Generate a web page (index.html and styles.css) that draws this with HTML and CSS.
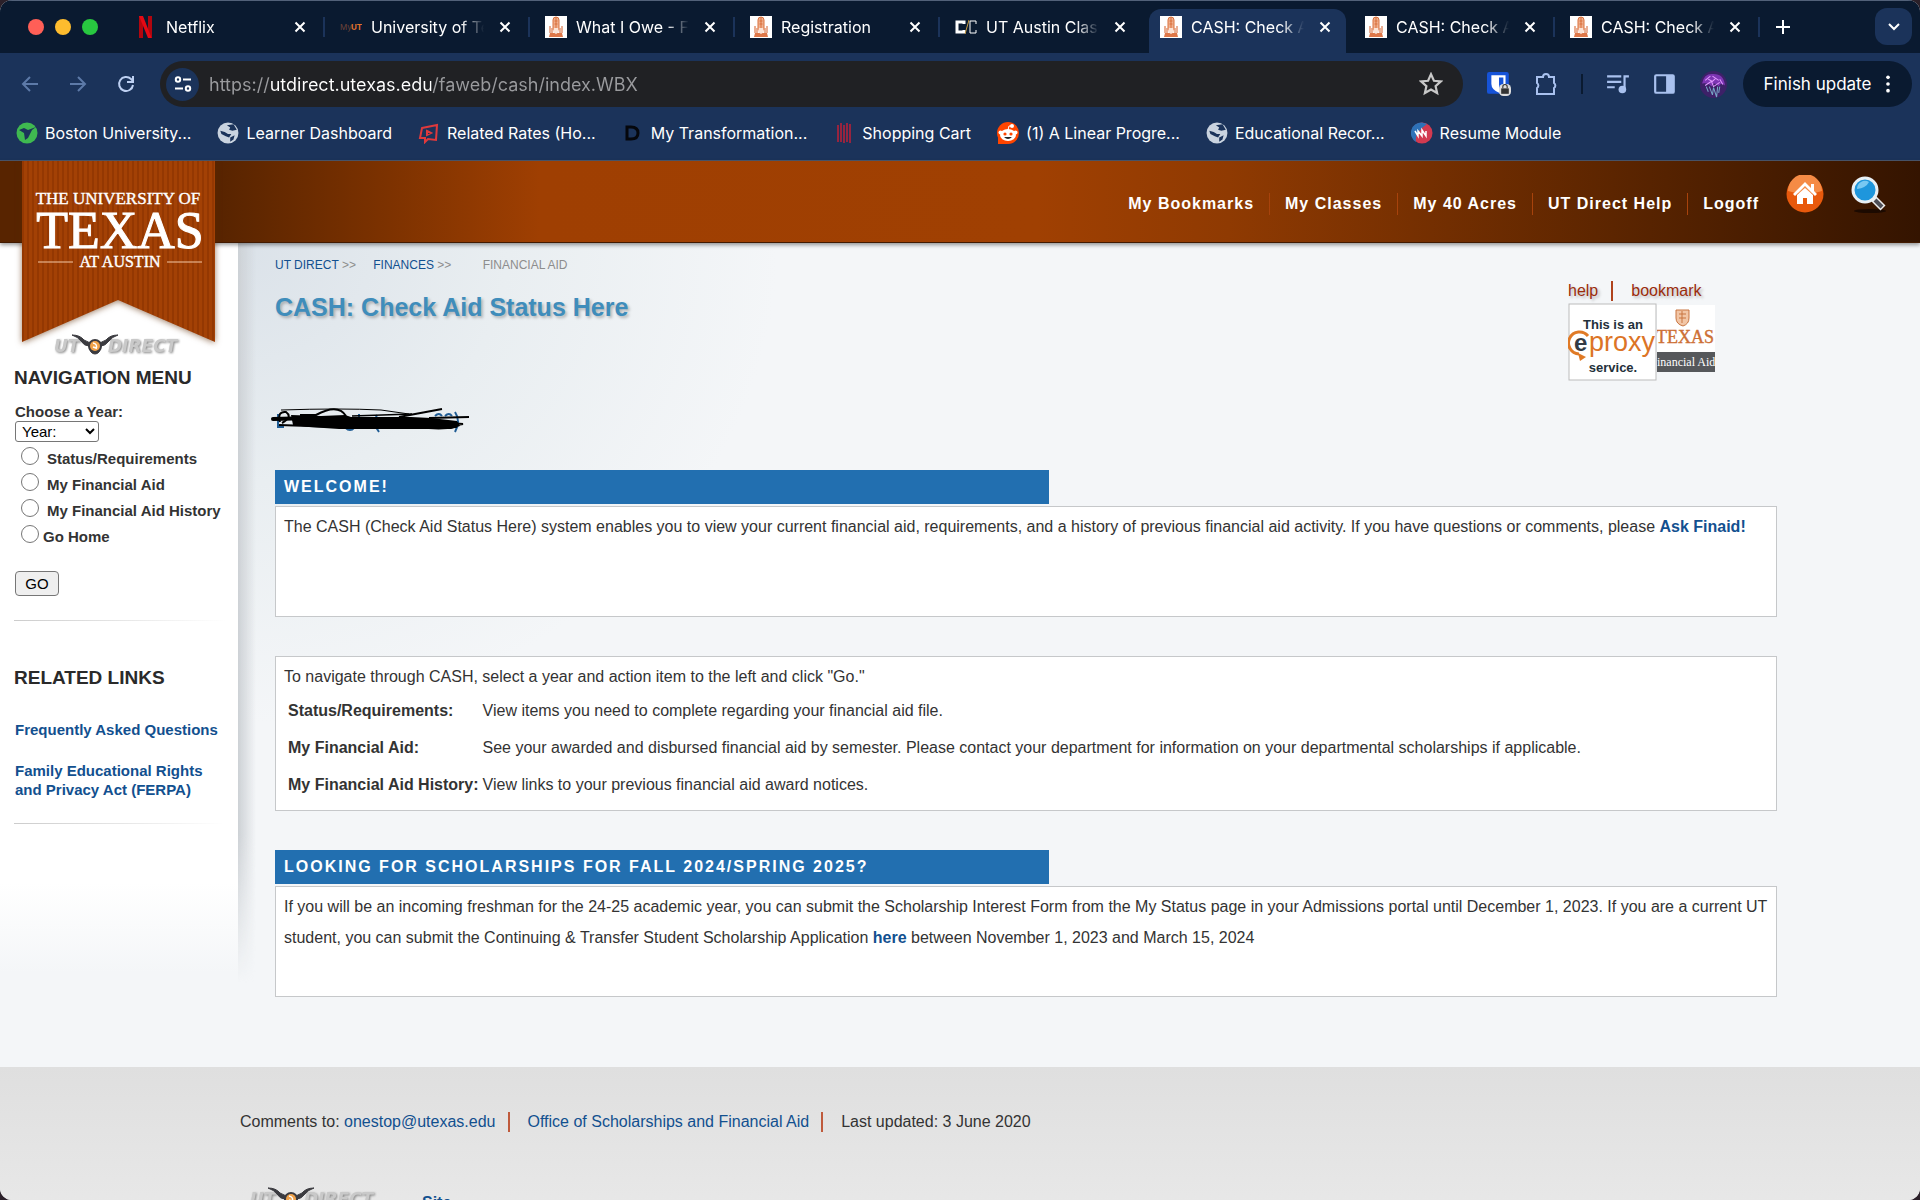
FILE: index.html
```html
<!DOCTYPE html>
<html lang="en">
<head>
    <meta charset="UTF-8">
    <meta name="viewport" content="width=device-width, initial-scale=1.0">
    <title>CASH: Check Aid Status Here</title>
    <link rel="stylesheet" href="styles.css">
</head>
<body>

<!-- Shared icons -->
<svg class="defs" aria-hidden="true">
    <symbol id="tower" viewBox="0 0 22 22">
        <rect width="22" height="22" fill="#fff"/>
        <path d="M8 14V4q0-3 3-3t3 3v10z" fill="#f0b08e" stroke="#d9703c"/>
        <path d="M11 1v12M9.500 5h3M9.500 8h3" stroke="#d9703c"/>
        <path d="M5 10v7M7 12v5M15 12v5M17 10v7" stroke="#e39470" stroke-width="1.500"/>
        <path d="M5 17h12l1 4H4z" fill="#df7748"/>
        <path d="M9 12h4l1 4-3 2-3-2z" fill="#fbe3d6"/>
    </symbol>
    <symbol id="x" viewBox="0 0 12 12">
        <path d="M1.500 1.500l9 9M10.500 1.500l-9 9" stroke="#fff" stroke-width="2"/>
    </symbol>
    <symbol id="globe" viewBox="0 0 20 20">
        <circle cx="10" cy="10" r="9.500" fill="#c9d3df"/>
        <path d="M3 8l4 1 3 2 3 0-2 3-3-1-4-2zM9 3l6-1 3 5-4 1-3-1 1-2zM12 14l4-2-1 4-3 2z" fill="#1b335a"/>
    </symbol>
    <symbol id="longhorn" viewBox="0 0 132 26">
        <path d="M18 2q8 0 12 5 4 3 11 3 7 0 11-3 4-5 12-5-6 2-9 6-4 5-8 5-1 8-6 8t-6-8q-5 0-8-5-3-4-9-6z" fill="#3b3b40" stroke="#3b3b40"/>
        <circle cx="41" cy="13" r="7" fill="#3b3b40"/>
        <circle cx="41" cy="13" r="5" fill="#f0a24a"/>
        <path d="M39 10q5 1 3 6M39 14l3 1" stroke="#fff" stroke-width="1.500" fill="none"/>
    </symbol>
</svg>

<div class="window">

<!-- Browser tabs -->
<div class="tabs">
    <div class="lights"><span class="red"></span><span class="yellow"></span><span class="green"></span></div>
    <div class="tab">
        <svg class="favicon" viewBox="0 0 22 22"><path d="M4 0h4v22l-4 1zM13 0h4v23l-4-1z" fill="#b1060f"/><path d="M4 0h4l9 23-4-1z" fill="#e50914"/></svg>
        <a href="#">Netflix</a><button aria-label="Close tab"><svg><use href="#x"/></svg></button>
    </div>
    <div class="tab">
        <svg class="favicon" viewBox="0 0 22 22"><text x="0" y="14" font-size="8" fill="#6d4338">My</text><text x="11" y="14" font-size="8" font-weight="bold" fill="#e2742c">UT</text></svg>
        <a href="#">University of Texas</a><button aria-label="Close tab"><svg><use href="#x"/></svg></button>
    </div>
    <div class="tab">
        <svg class="favicon"><use href="#tower"/></svg>
        <a href="#">What I Owe - Fin</a><button aria-label="Close tab"><svg><use href="#x"/></svg></button>
    </div>
    <div class="tab">
        <svg class="favicon"><use href="#tower"/></svg>
        <a href="#">Registration</a><button aria-label="Close tab"><svg><use href="#x"/></svg></button>
    </div>
    <div class="tab">
        <svg class="favicon" viewBox="0 0 22 22"><path d="M9 8V6H2v10h7v-2" fill="none" stroke="#fff" stroke-width="3"/><path d="M10 18l4-14" stroke="#c99a3c"/><path d="M21 8V5h-6v12h6v-3" fill="none" stroke="#fff"/></svg>
        <a href="#">UT Austin Class</a><button aria-label="Close tab"><svg><use href="#x"/></svg></button>
    </div>
    <div class="tab active">
        <svg class="favicon"><use href="#tower"/></svg>
        <a href="#">CASH: Check Aid</a><button aria-label="Close tab"><svg><use href="#x"/></svg></button>
    </div>
    <div class="tab">
        <svg class="favicon"><use href="#tower"/></svg>
        <a href="#">CASH: Check Aid</a><button aria-label="Close tab"><svg><use href="#x"/></svg></button>
    </div>
    <div class="tab">
        <svg class="favicon"><use href="#tower"/></svg>
        <a href="#">CASH: Check Aid</a><button aria-label="Close tab"><svg><use href="#x"/></svg></button>
    </div>
    <button class="new-tab" aria-label="New tab"><svg viewBox="0 0 14 14"><path d="M7 0v14M0 7h14" stroke="#fff" stroke-width="2"/></svg></button>
    <button class="tab-search" aria-label="Search tabs"><svg viewBox="0 0 12 12"><path d="M1 3l5 5 5-5" fill="none" stroke="#fff" stroke-width="2"/></svg></button>
</div>

<!-- Address bar -->
<div class="toolbar">
    <button aria-label="Back"><svg viewBox="0 0 20 20"><path d="M18 10H3M10 3l-7 7 7 7" fill="none" stroke="#5d7aa8" stroke-width="2"/></svg></button>
    <button aria-label="Forward"><svg viewBox="0 0 20 20"><path d="M2 10h15M10 3l7 7-7 7" fill="none" stroke="#5d7aa8" stroke-width="2"/></svg></button>
    <button aria-label="Reload"><svg viewBox="0 0 20 20"><path d="M17 11a7 7 0 1 1-2-6l2 2" fill="none" stroke="#bdd0f2" stroke-width="2"/><path d="M18 2v7h-7v-2h5V2z" fill="#bdd0f2"/></svg></button>
    <div class="omnibox">
        <button class="site-info" aria-label="Site information"><svg viewBox="0 0 18 18"><g fill="none" stroke="#fff" stroke-width="2"><circle cx="4" cy="4.500" r="2.200"/><path d="M9 4.500h8M1 13.500h8"/><circle cx="14" cy="13.500" r="2.200"/></g></svg></button>
        <input type="text" aria-label="Address" value="https://utdirect.utexas.edu/faweb/cash/index.WBX">
        <button aria-label="Bookmark this tab"><svg viewBox="0 0 22 22"><path d="M11 2l2.700 6 6.300.600-4.800 4.300 1.400 6.400L11 16l-5.600 3.300 1.400-6.400L2 8.600 8.300 8z" fill="none" stroke="#c8c8c8" stroke-width="2"/></svg></button>
    </div>
    <div class="extensions">
        <button aria-label="Bitwarden"><svg viewBox="0 0 22 22"><rect width="20" height="20" rx="2" fill="#1653d8"/><path d="M4 3h13v8q0 5-6 8-7-3-7-8z" fill="#fff"/><path d="M11 5h4v6q0 3-4 6z" fill="#1653d8"/><rect x="11" y="11" width="11" height="11" rx="4" fill="#ddd"/><rect x="13" y="15" width="7" height="5" fill="#333"/><path d="M14.500 15v-1.500a2 2 0 0 1 4 0V15" fill="none" stroke="#333"/></svg></button>
        <button aria-label="Extensions"><svg viewBox="0 0 24 24"><path d="M3 5h6a3 3 0 0 1 6 0h5v6a3 3 0 0 1 0 5v6H3v-6a3 3 0 0 0 0-5z" fill="none" stroke="#a9c1ee" stroke-width="2"/></svg></button>
        <span class="divider"></span>
        <button aria-label="Media"><svg viewBox="0 0 22 22"><path d="M1 4h13M1 9h13M1 14h7M17 16V4h4" fill="none" stroke="#a9c1ee" stroke-width="2"/><circle cx="15" cy="16" r="3.500" fill="#a9c1ee"/></svg></button>
        <button aria-label="Side panel"><svg viewBox="0 0 22 22"><rect x="2" y="3" width="17" height="16" rx="1" fill="none" stroke="#a9c1ee" stroke-width="2"/><path d="M12 3h7v16h-7z" fill="#a9c1ee"/></svg></button>
        <button aria-label="Profile"><svg class="avatar" viewBox="0 0 26 26"><circle cx="13" cy="13" r="13" fill="#3d2168"/><path d="M2 12Q4 2 13 3q10 0 11 11-4-4-6 1-4-6-7 0-3-4-9-3z" fill="#7d35b3"/><path d="M5 9l5-4M12 5l6 4M5 14l6-4 2 5 6-4M19 8l3 5M8 8l4 2 3-3" stroke="#e29bff" fill="none"/><path d="M9 15l3 8 1-7 3 9 1-10M6 15l2 5M19 15l-1 6" stroke="#77a5c5" fill="none"/></svg></button>
    </div>
    <button class="update">Finish update <svg viewBox="0 0 6 24"><circle cx="3" cy="4" r="2.200"/><circle cx="3" cy="12" r="2.200"/><circle cx="3" cy="20" r="2.200"/></svg></button>
</div>

<!-- Bookmarks -->
<div class="bookmarks">
    <a href="#"><svg viewBox="0 0 22 22"><circle cx="11" cy="11" r="10.500" fill="#3fb950"/><path d="M3 8l5-2 4 2 8-3-4 3-4 8-3 2-1-7z" fill="#1b335a"/></svg>Boston University...</a>
    <a href="#"><svg><use href="#globe"/></svg>Learner Dashboard</a>
    <a href="#"><svg viewBox="0 0 22 22"><path d="M4 6l15-3-1 15-8-1-3 3v-4H2zM9 9l4 2-4 2z" fill="none" stroke="#e0393c" stroke-width="2"/></svg>Related Rates (Ho...</a>
    <a href="#"><svg viewBox="0 0 22 22"><path d="M5 5h4q7 0 7 6t-7 6H5z" fill="none" stroke="#05070c" stroke-width="3"/></svg>My Transformation...</a>
    <a href="#"><svg viewBox="0 0 22 22"><path d="M5 3v17M8 1v19M11 3v18M14 1v19M17 2v19" stroke="#96243f" stroke-width="2"/></svg>Shopping Cart</a>
    <a href="#"><svg viewBox="0 0 22 22"><circle cx="11" cy="11" r="11" fill="#ff4500"/><path d="M1 15v7h10z" fill="#ff4500"/><ellipse cx="11" cy="13" rx="8" ry="6" fill="#fff"/><circle cx="3.500" cy="10.500" r="2" fill="#fff"/><circle cx="18.500" cy="10.500" r="2" fill="#fff"/><circle cx="15" cy="4" r="2" fill="#fff"/><path d="M11 8l1-4 3 0" fill="none" stroke="#fff"/><circle cx="8" cy="12" r="1.600" fill="#ff4500"/><circle cx="14" cy="12" r="1.600" fill="#ff4500"/><path d="M7 15h8q-4 4-8 0z" fill="#222"/></svg>(1) A Linear Progre...</a>
    <a href="#"><svg><use href="#globe"/></svg>Educational Recor...</a>
    <a href="#"><svg viewBox="0 0 22 22"><circle cx="11" cy="11" r="10.500" fill="#d23a50"/><path d="M11 .500A10.500 10.500 0 0 0 5 20Q3 11 16 2z" fill="#2e72b8"/><path d="M4 9l3 5V9l4 5V8l4 6V9" fill="none" stroke="#fff" stroke-width="1.500"/></svg>Resume Module</a>
</div>

<!-- Site header -->
<header>
    <svg class="banner" viewBox="0 0 213 188">
        <defs>
            <pattern id="stripes" width="5" height="4" patternUnits="userSpaceOnUse"><rect width="5" height="4" fill="#a34105"/><rect width="2" height="4" fill="#943802"/></pattern>
        </defs>
        <path class="ribbon" d="M10 0h193v181l-97-42-96 42z" fill="url(#stripes)"/>
        <g class="banner-text">
            <text x="106" y="43" font-size="17">THE UNIVERSITY OF</text>
            <text x="108" y="87" font-size="52" stroke-width="1">TEXAS</text>
            <text x="108" y="106" font-size="16">AT AUSTIN</text>
            <path d="M26 101h35M155 101h35" stroke="#f3c8a5" stroke-width="1"/>
        </g>
    </svg>
    <nav>
        <a href="#">My Bookmarks</a>
        <a href="#">My Classes</a>
        <a href="#">My 40 Acres</a>
        <a href="#">UT Direct Help</a>
        <a href="#">Logoff</a>
    </nav>
    <div class="header-icons">
        <a href="#" aria-label="Home"><svg viewBox="0 0 38 38"><circle cx="19" cy="19" r="18.500" fill="#e8590c"/><path d="M2 16a17 17 0 0 1 34 0q-16 6-34 0z" fill="#f58b45"/><path d="M19 7L7 19l2 2 10-10 10 10 2-2-3-3V9h-3v4z" fill="#fff"/><path d="M11 20l8-7 8 7v9h-6v-6h-4v6h-6z" fill="#fff"/></svg></a>
        <a href="#" aria-label="Search"><svg viewBox="0 0 38 38"><ellipse cx="20" cy="36" rx="16" ry="2" fill="#1c0a00"/><path d="M22 22l11 11" stroke="#eee" stroke-width="7"/><path d="M25 25l7 7" stroke="#4e4e56" stroke-width="4"/><circle cx="15" cy="15" r="12" fill="#1e96dc" stroke="#e8f0f5" stroke-width="3"/><path d="M7 14a8 8 0 0 1 12-7q-3 6-12 7z" fill="#78c8f2"/></svg></a>
    </div>
</header>

<div class="page">
    <aside>
        <svg class="utdirect" viewBox="0 0 132 26">
            <text x="0" y="19">UT</text>
            <text x="54" y="19">DIRECT</text>
            <use href="#longhorn"/>
        </svg>
        <h3>NAVIGATION MENU</h3>
        <form>
            <label class="year-label" for="year">Choose a Year:</label>
            <select id="year"><option>Year:</option></select>
            <div class="choice"><input type="radio" name="action" id="status"><label for="status">Status/Requirements</label></div>
            <div class="choice"><input type="radio" name="action" id="aid"><label for="aid">My Financial Aid</label></div>
            <div class="choice"><input type="radio" name="action" id="history"><label for="history">My Financial Aid History</label></div>
            <div class="choice home"><input type="radio" name="action" id="home"><label for="home">Go Home</label></div>
            <button type="button" class="go">GO</button>
        </form>
        <hr>
        <h3>RELATED LINKS</h3>
        <p><a href="#">Frequently Asked Questions</a></p>
        <p><a href="#">Family Educational Rights and Privacy Act (FERPA)</a></p>
        <hr>
    </aside>

    <main>
        <div class="page-head">
            <div>
                <div class="crumbs"><a href="#">UT DIRECT</a> &gt;&gt; <a href="#" class="second">FINANCES</a> &gt;&gt; <span>FINANCIAL AID</span></div>
                <h1>CASH: Check Aid Status Here</h1>
                <svg class="scribble" viewBox="0 0 204 30">
                    <path d="M9 10v13h6M76 20q0 6 5 6t4-6M108 11q-5 8 2 17M90 10v4M166 12q4-4 7 0M176 12q4-4 7 0M186 8q6 9 0 20" fill="none" stroke="#1f5c94" stroke-width="2"/>
                    <path d="M22 11l30 1 24-1 6 2h60l20 1 26 3 3 5-9 3H70l-30-2-16-2z" fill="#000"/>
                    <g fill="none" stroke="#000">
                        <path d="M12 6q60-2 100 0l28 4"/>
                        <path d="M83 12l60-2M150 22q16 5 38 1" stroke-width="1.500"/>
                        <path d="M10 21l60 2M11 18q-3-11 6-10 7 5-4 11M31 11l16 0q22-12 30 1M130 13l43-8M160 14l40-1M166 18l28 2-24 4" stroke-width="2"/>
                        <path d="M4 15l40-1" stroke-width="4" stroke-linecap="round"/>
                    </g>
                </svg>
            </div>
            <div class="tools">
                <div class="tool-links"><a href="#">help</a><a href="#">bookmark</a></div>
                <div class="badges">
                    <svg class="eproxy" viewBox="0 0 89 78">
                        <rect x="1" y="1" width="87" height="76" fill="#fff" stroke="#bbb"/>
                        <g font-weight="bold" font-size="13" text-anchor="middle" fill="#23303a"><text x="45" y="26">This is an</text><text x="45" y="69">service.</text></g>
                        <path d="M20 33a11 11 0 1 0-9 18" fill="none" stroke="#e07a26" stroke-width="3"/>
                        <path d="M10 50l8 4-6 4z" fill="#e07a26"/>
                        <text x="6" y="48" font-size="24" font-weight="bold" fill="#333b45">e</text>
                        <text x="21" y="48" font-size="27" fill="#dc7426">proxy</text>
                    </svg>
                    <svg class="finaid" viewBox="0 0 58 67">
                        <rect width="58" height="67" fill="#fff"/>
                        <path d="M19 5h13v8q0 6-6 8-7-2-7-8z" fill="#f2c6a6" stroke="#c87541"/><path d="M22 9h7M25 6v12M22 13h7" stroke="#c87541"/>
                        <text x="-1" y="38" font-size="18" fill="#cd7036" stroke="#cd7036" stroke-width="0.4">TEXAS</text>
                        <rect y="47" width="58" height="20" fill="#56585b"/>
                        <text x="0" y="61" font-size="12" fill="#fff">inancial Aid</text>
                    </svg>
                </div>
            </div>
        </div>

        <h2>WELCOME!</h2>
        <div class="panel">
            The CASH (Check Aid Status Here) system enables you to view your current financial aid, requirements, and a history of previous financial aid activity. If you have questions or comments, please <a href="#">Ask Finaid!</a>
        </div>

        <div class="panel guide">
            To navigate through CASH, select a year and action item to the left and click "Go."
            <table>
                <tr><th>Status/Requirements:</th><td>View items you need to complete regarding your financial aid file.</td></tr>
                <tr><th>My Financial Aid:</th><td>See your awarded and disbursed financial aid by semester. Please contact your department for information on your departmental scholarships if applicable.</td></tr>
                <tr><th>My Financial Aid History:</th><td>View links to your previous financial aid award notices.</td></tr>
            </table>
        </div>

        <h2>LOOKING FOR SCHOLARSHIPS FOR FALL 2024/SPRING 2025?</h2>
        <div class="panel">
            If you will be an incoming freshman for the 24-25 academic year, you can submit the Scholarship Interest Form from the My Status page in your Admissions portal until December 1, 2023. If you are a current UT student, you can submit the Continuing &amp; Transfer Student Scholarship Application <a href="#">here</a> between November 1, 2023 and March 15, 2024
        </div>
    </main>
</div>

<footer>
    <ul>
        <li>Comments to: <a href="#">onestop@utexas.edu</a></li>
        <li><a href="#">Office of Scholarships and Financial Aid</a></li>
        <li>Last updated: 3 June 2020</li>
    </ul>
    <div class="footer-site">
        <svg class="utdirect" viewBox="0 0 132 26">
            <text x="0" y="19">UT</text>
            <text x="54" y="19">DIRECT</text>
            <use href="#longhorn"/>
        </svg>
        <a href="#">Site</a>
    </div>
</footer>

</div>

</body>
</html>
```
FILE: styles.css
```css
* {
    box-sizing: border-box;
}

body {
    font-family: "Liberation Sans", Arial, sans-serif;
    font-size: 15px;
    color: #333;
    margin: 0;
    background-color: #2b2029;
}

a {
    color: #12508f;
    text-decoration: none;
}

button {
    font-family: inherit;
    padding: 0;
    border: 0;
    background: none;
    display: flex;
    align-items: center;
    justify-content: center;
}

.defs {
    position: absolute;
    width: 0;
    height: 0;
}

.window {
    display: flex;
    flex-direction: column;
    height: 100vh;
    overflow: hidden;
    border-radius: 12px;
    background-color: #f4f6f8;
}

/* Browser tabs */
.tabs {
    display: flex;
    flex: none;
    height: 53px;
    padding: 0 8px 0 28px;
    background-color: #0a1a30;
    border-top: 1px solid #526179;
    font-family: Inter, sans-serif;
}

.lights {
    display: flex;
    align-items: center;
    gap: 11px;
    width: 96px;
}

.lights span {
    width: 16px;
    height: 16px;
    border-radius: 50%;
}

.red {
    background-color: #ff5f57;
}

.yellow {
    background-color: #febc2e;
}

.green {
    background-color: #28c840;
}

.tab {
    position: relative;
    display: flex;
    align-items: center;
    width: 197px;
    height: 44px;
    margin: 8px 8px 0 0;
    padding: 0 15px 9px 11px;
    font-size: 16px;
}

.tab::after {
    content: "";
    position: absolute;
    right: -4px;
    top: 8px;
    width: 2px;
    height: 20px;
    background-color: #1b335a;
}

.tab .favicon {
    width: 22px;
    height: 22px;
    flex: none;
    margin-right: 9px;
}

.tab a {
    flex: 1;
    color: #fff;
    white-space: nowrap;
    overflow: hidden;
    margin-right: 15px;
    -webkit-mask-image: linear-gradient(to right, #000 80%, transparent);
    mask-image: linear-gradient(to right, #000 80%, transparent);
}

.tab button svg {
    width: 12px;
    height: 12px;
}

.tab.active {
    background-color: #1b335a;
    border-radius: 12px 12px 0 0;
}

.tab.active::after,
.tab:has(+ .active)::after {
    display: none;
}

.new-tab {
    margin-left: 12px;
    padding-bottom: 1px;
}

.new-tab svg {
    width: 14px;
    height: 14px;
}

.tab-search {
    width: 37px;
    height: 37px;
    margin: 7px 0 0 auto;
    border-radius: 12px;
    background-color: #1b335a;
}

.tab-search svg {
    width: 12px;
    height: 12px;
}

/* Address bar */
.toolbar {
    display: flex;
    align-items: center;
    flex: none;
    height: 62px;
    padding: 0 8px 0 20px;
    background-color: #1b335a;
    font-family: Inter, sans-serif;
}

.toolbar > button {
    margin-right: 28px;
}

.toolbar svg {
    width: 20px;
    height: 20px;
}

.omnibox {
    display: flex;
    flex: 1;
    align-items: center;
    height: 46px;
    margin-left: -4px;
    padding: 0 20px 0 6px;
    border-radius: 23px;
    background-color: #202124;
}

.omnibox .site-info {
    width: 33px;
    height: 33px;
    border-radius: 50%;
    background-color: #1b335a;
}

.omnibox .site-info svg {
    width: 18px;
    height: 18px;
}

/* the host part of the address is brighter than the rest */
.omnibox input {
    flex: 1;
    margin-left: 10px;
    padding: 0;
    border: 0;
    outline: 0;
    font-family: Inter, sans-serif;
    font-size: 18px;
    background: linear-gradient(to right, #9a9b9e 61px, #fff 61px, #fff 222px, #9a9b9e 222px);
    -webkit-background-clip: text;
    background-clip: text;
    color: transparent;
}

.omnibox > button:last-child svg {
    width: 24px;
    height: 24px;
}

.extensions {
    display: flex;
    align-items: center;
    gap: 23px;
    padding: 0 16px 0 24px;
}

.extensions svg {
    width: 24px;
    height: 24px;
}

.extensions .avatar {
    width: 27px;
    height: 27px;
}

.divider {
    width: 2px;
    height: 20px;
    background-color: #0a1a30;
}

.toolbar .update {
    gap: 14px;
    width: 169px;
    height: 46px;
    margin: 0;
    border-radius: 23px;
    background-color: #0a1a30;
    color: #fff;
    font-size: 17px;
}

.update svg {
    width: 6px;
    fill: #fff;
}

/* Bookmarks */
.bookmarks {
    display: flex;
    gap: 26px;
    flex: none;
    height: 46px;
    padding: 0 16px 10px;
    background-color: #1b335a;
    border-bottom: 1px solid #4b566b;
    font-family: Inter, sans-serif;
    font-size: 16px;
}

.bookmarks a {
    display: flex;
    align-items: center;
    gap: 7px;
    color: #fff;
    white-space: nowrap;
}

.bookmarks svg {
    width: 22px;
    height: 22px;
}

/* Site header */
header {
    position: relative;
    z-index: 1;
    display: flex;
    justify-content: flex-end;
    flex: none;
    height: 82px;
    padding: 14px 32px 0 0;
    background: linear-gradient(to right, #582400 0, #582400 220px, #7d3200 390px, #9f3f02 540px, #a04002 54%, #8f3a02 64%, #5c2500 84%, #341400 100%);
    border-bottom: 1px solid #421a00;
    box-shadow: 0 2px 4px rgba(0, 0, 0, 0.4);
}

.banner {
    position: absolute;
    left: 12px;
    top: 0;
    width: 213px;
    height: 188px;
}

.ribbon {
    filter: drop-shadow(0 1px 3px rgba(90, 40, 0, 0.6));
}

.banner-text {
    font-family: "Liberation Serif", serif;
    fill: #fff;
    stroke: #fff;
    stroke-width: 0.4;
    text-anchor: middle;
}

nav {
    display: flex;
    align-items: flex-start;
    padding: 18px 12px 0 0;
}

nav a {
    color: #fff;
    font-size: 16px;
    font-weight: bold;
    letter-spacing: 1px;
    line-height: 22px;
    padding: 0 15px;
}

nav a + a {
    border-left: 1px solid #a8430c;
}

.header-icons {
    display: flex;
    gap: 26px;
}

.header-icons svg {
    display: block;
    width: 38px;
    height: 38px;
}

/* Page body */
.page {
    display: flex;
    flex: none;
    background: radial-gradient(ellipse 540px 480px at 238px 0, #dbe2e9, #e9eef1 50%, #f4f6f8);
}

aside {
    position: relative;
    width: 238px;
    padding: 90px 13px 0 14px;
    background: linear-gradient(#fff 640px, #f4f6f8 730px);
}

/* soft shadow down the right edge of the menu */
aside::after {
    content: "";
    position: absolute;
    left: 238px;
    top: 0;
    width: 18px;
    height: 740px;
    background: linear-gradient(to right, #cdd1d5, rgba(215, 220, 225, 0));
    -webkit-mask-image: linear-gradient(#000 80%, transparent);
    mask-image: linear-gradient(#000 80%, transparent);
}

.utdirect {
    display: block;
    width: 132px;
    height: 26px;
}

.utdirect text {
    font-family: "DejaVu Sans", sans-serif;
    font-size: 17px;
    font-weight: bold;
    font-style: italic;
    fill: #c9c9c9;
    filter: drop-shadow(1px 1px 1px #888);
}

aside .utdirect {
    margin-left: 40px;
}

aside h3 {
    margin: 8px 0 0;
    font-size: 19px;
    line-height: 22px;
    color: #2a2a2a;
}

aside form {
    padding: 13px 1px 0;
    font-weight: bold;
}

.year-label {
    display: block;
    line-height: 19px;
}

aside select {
    display: block;
    width: 84px;
    height: 21px;
    margin-bottom: 5px;
    padding: 0 2px;
    border: 1px solid #767676;
    border-radius: 3px;
    background-color: #fff;
    font-family: inherit;
    font-size: 15px;
    color: #000;
}

.choice {
    display: flex;
    align-items: flex-start;
    gap: 8px;
    height: 26px;
    padding-left: 6px;
    line-height: 24px;
    white-space: nowrap;
}

.choice.home {
    gap: 4px;
}

.choice input {
    width: 18px;
    height: 18px;
    margin: 0;
}

.go {
    width: 44px;
    height: 25px;
    margin-top: 20px;
    border: 1px solid #767676;
    border-radius: 4px;
    background-color: #efefef;
    font-size: 15px;
    color: #000;
}

aside hr {
    height: 1px;
    margin: 24px 0 0;
    border: 0;
    background: linear-gradient(to right, #ccc, #fff);
}

aside hr + h3 {
    margin: 46px 0 31px;
}

aside p {
    margin: 0 0 22px 1px;
    font-weight: bold;
    line-height: 19px;
}

aside p a {
    display: block;
}

main {
    flex: 1;
    padding: 12px 143px 70px 37px;
}

.page-head {
    display: flex;
    justify-content: space-between;
    padding-right: 62px;
    margin-bottom: 36px;
}

.crumbs {
    font-size: 12px;
    line-height: 20px;
    color: #8d8d8d;
}

.crumbs .second {
    margin-left: 14px;
}

.crumbs span {
    margin-left: 28px;
}

h1 {
    margin: 17px 0 82px;
    font-size: 25px;
    line-height: 30px;
    color: #3f8dbb;
    text-shadow: 2px 2px 3px rgba(0, 0, 0, 0.25);
}

.scribble {
    display: block;
    width: 204px;
    height: 30px;
    margin-left: -6px;
}

.tools {
    padding-top: 26px;
}

.tool-links {
    display: flex;
    font-size: 16px;
    line-height: 20px;
}

.tool-links a {
    color: #9b2c0b;
    text-shadow: 2px 2px 3px rgba(0, 0, 0, 0.25);
}

.tool-links a + a {
    margin-left: 13px;
    padding-left: 18px;
    border-left: 2px solid #b0431d;
}

.badges {
    display: flex;
    padding-top: 2px;
}

.eproxy {
    width: 89px;
    height: 78px;
}

.finaid {
    width: 58px;
    height: 67px;
    margin-top: 2px;
    font-family: "Liberation Serif", serif;
}

h2 {
    width: 51.5%;
    margin: 0 0 2px;
    padding: 0 9px;
    background-color: #226fb0;
    color: #fff;
    font-size: 16px;
    letter-spacing: 2px;
    line-height: 34px;
}

.panel {
    min-height: 111px;
    margin-bottom: 39px;
    padding: 4px 8px;
    border: 1px solid #c6c8ca;
    background-color: #fff;
    font-size: 16px;
    line-height: 31px;
}

.panel:last-child {
    margin-bottom: 0;
}

.panel a {
    font-weight: bold;
}

.guide {
    min-height: 155px;
}

table {
    border-collapse: collapse;
}

th,
td {
    height: 37px;
    padding: 0 4px;
    text-align: left;
    line-height: 31px;
}

th {
    padding-right: 0;
    white-space: nowrap;
}

/* Footer */
footer {
    flex: 1 0 auto;
    padding: 45px 0 0 240px;
    background: linear-gradient(#dfdfdf, #e8e8e8);
    font-size: 16px;
}

footer ul {
    display: flex;
    margin: 0;
    padding: 0;
    list-style: none;
    line-height: 20px;
}

footer li + li {
    margin-left: 12px;
    padding-left: 18px;
    border-left: 2px solid #bf5a3c;
}

.footer-site {
    display: flex;
    gap: 40px;
    padding: 54px 0 0 10px;
}

.footer-site a {
    padding-top: 8px;
    font-weight: bold;
}
```
